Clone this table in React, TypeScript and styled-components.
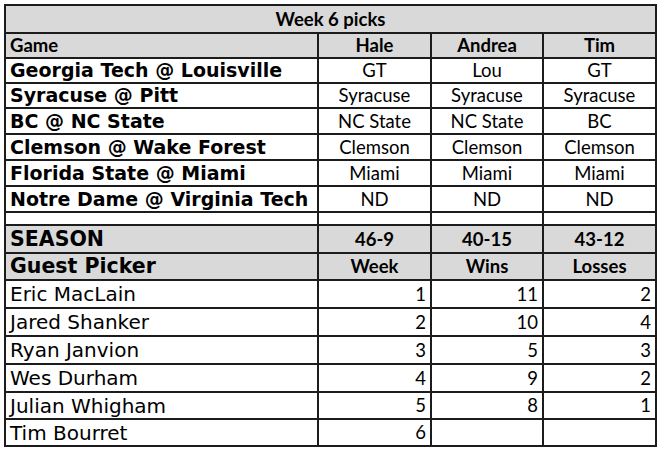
import React from 'react';
import styled, { createGlobalStyle } from 'styled-components';

const GlobalStyle = createGlobalStyle`
  html, body {
    margin: 0;
    padding: 0;
    background: #ffffff;
  }
`;

const GRID = '#1c1c1c';
const HEAD_BG = '#d9d9d9';

const games = [
  { game: 'Georgia Tech @ Louisville', picks: ['GT', 'Lou', 'GT'] },
  { game: 'Syracuse @ Pitt', picks: ['Syracuse', 'Syracuse', 'Syracuse'] },
  { game: 'BC @ NC State', picks: ['NC State', 'NC State', 'BC'] },
  { game: 'Clemson @ Wake Forest', picks: ['Clemson', 'Clemson', 'Clemson'] },
  { game: 'Florida State @ Miami', picks: ['Miami', 'Miami', 'Miami'] },
  { game: 'Notre Dame @ Virginia Tech', picks: ['ND', 'ND', 'ND'] },
];

const guests = [
  { name: 'Eric MacLain', week: 1, wins: 11, losses: 2 },
  { name: 'Jared Shanker', week: 2, wins: 10, losses: 4 },
  { name: 'Ryan Janvion', week: 3, wins: 5, losses: 3 },
  { name: 'Wes Durham', week: 4, wins: 9, losses: 2 },
  { name: 'Julian Whigham', week: 5, wins: 8, losses: 1 },
  { name: 'Tim Bourret', week: 6 },
];

const pickRowHeights = [25, 25, 26, 26, 26, 26];
const guestRowHeights = [28, 28, 28, 28, 27, 27];

const App: React.FC = () => {
  return (
    <>
      <GlobalStyle />
      <Page>
        <Sheet>
          <colgroup>
            <col style={{ width: 313 }} />
            <col style={{ width: 113 }} />
            <col style={{ width: 112 }} />
            <col style={{ width: 113 }} />
          </colgroup>
          <tbody>
            <Row $height={28}>
              <Cell colSpan={4} $shade $bold $align="center" $font="calibri">
                Week 6 picks
              </Cell>
            </Row>
            <Row $height={25}>
              <Cell $shade $bold $font="calibri">
                Game
              </Cell>
              <Cell $shade $bold $align="center" $font="calibri">
                Hale
              </Cell>
              <Cell $shade $bold $align="center" $font="calibri">
                Andrea
              </Cell>
              <Cell $shade $bold $align="center" $font="calibri">
                Tim
              </Cell>
            </Row>
            {games.map((g, i) => (
              <Row key={g.game} $height={pickRowHeights[i]}>
                <Cell $bold $font="verdana">
                  {g.game}
                </Cell>
                {g.picks.map((p, j) => (
                  <Cell key={j} $align="center" $font="calibri">
                    {p}
                  </Cell>
                ))}
              </Row>
            ))}
            <Row $height={13}>
              <Cell />
              <Cell />
              <Cell />
              <Cell />
            </Row>
            <Row $height={28}>
              <Cell $shade $bold $font="verdana" $size={20.5}>
                SEASON
              </Cell>
              <Cell $shade $bold $align="center" $font="calibri">
                46-9
              </Cell>
              <Cell $shade $bold $align="center" $font="calibri">
                40-15
              </Cell>
              <Cell $shade $bold $align="center" $font="calibri">
                43-12
              </Cell>
            </Row>
            <Row $height={27}>
              <Cell $shade $bold $font="verdana" $size={20.5}>
                Guest Picker
              </Cell>
              <Cell $shade $bold $align="center" $font="calibri">
                Week
              </Cell>
              <Cell $shade $bold $align="center" $font="calibri">
                Wins
              </Cell>
              <Cell $shade $bold $align="center" $font="calibri">
                Losses
              </Cell>
            </Row>
            {guests.map((g, i) => (
              <Row key={g.name} $height={guestRowHeights[i]}>
                <Cell $font="verdana" $size={20}>
                  {g.name}
                </Cell>
                <Cell $align="right" $font="calibri">
                  {g.week}
                </Cell>
                <Cell $align="right" $font="calibri">
                  {g.wins ?? ''}
                </Cell>
                <Cell $align="right" $font="calibri">
                  {g.losses ?? ''}
                </Cell>
              </Row>
            ))}
          </tbody>
        </Sheet>
      </Page>
    </>
  );
};

const Page = styled.div`
  padding: 4px 0 0 4px;
  width: 659px;
  height: 450px;
  box-sizing: border-box;
  background: #ffffff;
`;

const Sheet = styled.table`
  border-collapse: collapse;
  table-layout: fixed;
  width: 651px;
  border: 2px solid ${GRID};
`;

const Row = styled.tr<{ $height: number }>`
  height: ${({ $height }) => $height}px;
`;

const Cell = styled.td<{
  $shade?: boolean;
  $bold?: boolean;
  $align?: 'left' | 'center' | 'right';
  $font?: 'verdana' | 'calibri';
  $size?: number;
}>`
  border: 2px solid ${GRID};
  padding: 0 4px;
  box-sizing: border-box;
  white-space: nowrap;
  overflow: hidden;
  line-height: 1;
  color: #000000;
  background: ${({ $shade }) => ($shade ? HEAD_BG : '#ffffff')};
  font-weight: ${({ $bold }) => ($bold ? 700 : 400)};
  text-align: ${({ $align }) => $align ?? 'left'};
  font-family: ${({ $font }) =>
    $font === 'verdana'
      ? '"DejaVu Sans", Verdana, sans-serif'
      : 'Lato, "Liberation Sans", sans-serif'};
  font-size: ${({ $size, $font }) =>
    $size ? $size : $font === 'verdana' ? 19 : 18.5}px;
`;

export default App;
